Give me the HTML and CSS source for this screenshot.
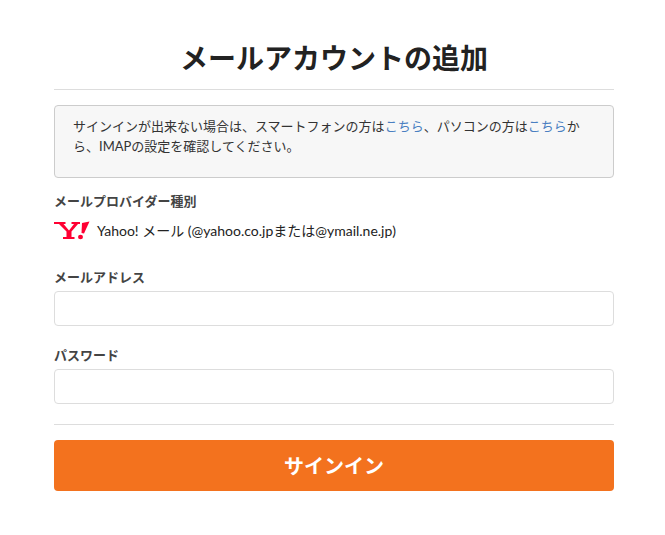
FILE: index.html
```html
<!DOCTYPE html>
<html lang="ja">
<head>
  <meta charset="UTF-8" />
  <title>メールアカウントの追加</title>
  <link rel="stylesheet" href="styles.css">
</head>
<body>
  <div class="container">
    <!-- Title -->
    <h1 class="title">メールアカウントの追加</h1>

    <!-- Notice -->
    <div class="notice">
      サインインが出来ない場合は、スマートフォンの方は<a href="#">こちら</a>、パソコンの方は<a href="#">こちら</a>から、IMAPの設定を確認してください。
    </div>

    <!-- Provider -->
    <div class="label provider-label">メールプロバイダー種別</div>
    <div class="provider">
      <svg class="yahoo-logo" width="36" height="20" viewBox="0 0 36 20">
        <path fill="#ff0033" d="M0 1h11.500v2H9.500l5.500 6.500L20 3h-2.500V1h8.500v2h-2l-6.500 7.500V16h3v2H9v-2h3.500v-5.500L5 3H0z"/>
        <path fill="#ff0033" d="M28 2l7.500-1.500-5.500 12-2.500-.5z"/>
        <ellipse fill="#ff0033" cx="26.500" cy="16" rx="2.500" ry="2.200"/>
      </svg>
      <span>Yahoo! メール (@yahoo.co.jpまたは@ymail.ne.jp)</span>
    </div>

    <!-- Form -->
    <div class="label address-label">メールアドレス</div>
    <input class="field" type="text">

    <div class="label password-label">パスワード</div>
    <input class="field" type="password">

    <hr class="divider">

    <button class="submit" type="button">サインイン</button>
  </div>
</body>
</html>
```

FILE: styles.css
```css
body {
  margin: 0;
  font-family: Lato, "Noto Sans CJK JP", sans-serif;
  color: #333;
  background: #fff;
}

.container {
  width: 560px;
  margin-left: 54px;
  padding-top: 39px;
}

/* Title */
.title {
  margin: 0;
  padding-bottom: 12px;
  border-bottom: 1px solid #ddd;
  font-size: 28px;
  line-height: 38px;
  font-weight: 700;
  text-align: center;
  color: #222;
}

/* Notice box */
.notice {
  height: 73px;
  box-sizing: border-box;
  margin-top: 15px;
  padding: 10px 18px;
  background: #f7f7f7;
  border: 1px solid #ccc;
  border-radius: 4px;
  font-size: 13px;
  line-height: 20px;
}

.notice a {
  color: #4a7fc1;
  text-decoration: none;
}

/* Labels */
.label {
  font-size: 13px;
  line-height: 18px;
  font-weight: 700;
  color: #444;
}

.provider-label {
  margin-top: 14px;
}

.address-label {
  margin-top: 27px;
}

.password-label {
  margin-top: 20px;
}

/* Provider row */
.provider {
  display: flex;
  align-items: center;
  gap: 7px;
  margin-top: 11px;
  font-size: 14px;
  line-height: 20px;
  color: #222;
}

.yahoo-logo {
  flex: none;
}

/* Inputs */
.field {
  display: block;
  width: 100%;
  height: 35px;
  box-sizing: border-box;
  margin-top: 5px;
  border: 1px solid #ddd;
  border-radius: 4px;
  background: #fff;
}

.divider {
  margin: 20px 0 15px;
  border: 0;
  border-top: 1px solid #ddd;
}

/* Sign in button */
.submit {
  display: block;
  width: 100%;
  height: 51px;
  border: 0;
  border-radius: 4px;
  background: #f3721e;
  color: #fff;
  font-family: inherit;
  font-size: 20px;
  font-weight: 700;
}
```
